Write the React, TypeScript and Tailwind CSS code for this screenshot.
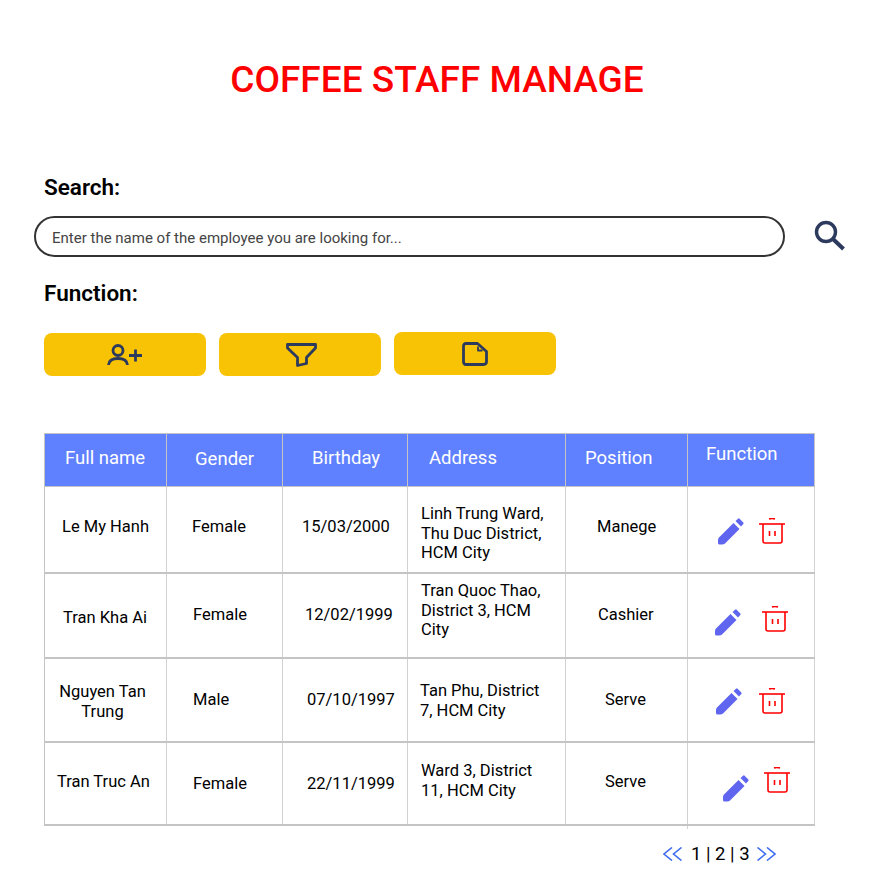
import React from 'react';

const headers = [
  { label: 'Full name', cls: 'pl-[20px] pt-[11px]' },
  { label: 'Gender', cls: 'pl-[28px] pt-[12px]' },
  { label: 'Birthday', cls: 'pl-[29px] pt-[11px]' },
  { label: 'Address', cls: 'pl-[21px] pt-[11px]' },
  { label: 'Position', cls: 'pl-[19px] pt-[11px]' },
  { label: 'Function', cls: 'pl-[18px] pt-[7px]' },
];

const rows = [
  {
    h: 'h-[87px]',
    cells: [
      { text: 'Le My Hanh', cls: 'pl-[17px] pt-[30px]' },
      { text: 'Female', cls: 'pl-[25px] pt-[30px]' },
      { text: '15/03/2000', cls: 'pl-[19px] pt-[30px]' },
      { text: 'Linh Trung Ward, Thu Duc District, HCM City', cls: 'pl-[13px] pt-[17px] pr-[14px]' },
      { text: 'Manege', cls: 'pl-[31px] pt-[30px]' },
    ],
    pen: 'ml-[30px] mt-[31px]',
    trash: 'ml-[15px] mt-[31px]',
  },
  {
    h: 'h-[85px]',
    cells: [
      { text: 'Tran Kha Ai', cls: 'pl-[18px] pt-[34px]' },
      { text: 'Female', cls: 'pl-[26px] pt-[31px]' },
      { text: '12/02/1999', cls: 'pl-[22px] pt-[31px]' },
      { text: 'Tran Quoc Thao, District 3, HCM City', cls: 'pl-[13px] pt-[7px] pr-[14px]' },
      { text: 'Cashier', cls: 'pl-[32px] pt-[31px]' },
    ],
    pen: 'ml-[27px] mt-[35px]',
    trash: 'ml-[21px] mt-[32px]',
  },
  {
    h: 'h-[84px]',
    cells: [
      { text: 'Nguyen Tan Trung', cls: 'pl-[7px] pr-[13px] pt-[23px] text-center' },
      { text: 'Male', cls: 'pl-[26px] pt-[31px]' },
      { text: '07/10/1997', cls: 'pl-[24px] pt-[31px]' },
      { text: 'Tan Phu, District 7, HCM City', cls: 'pl-[12px] pt-[22px] pr-[14px]' },
      { text: 'Serve', cls: 'pl-[39px] pt-[31px]' },
    ],
    pen: 'ml-[28px] mt-[29px]',
    trash: 'ml-[17px] mt-[29px]',
  },
  {
    h: 'h-[83px]',
    cells: [
      { text: 'Tran Truc An', cls: 'pl-[12px] pt-[29px]' },
      { text: 'Female', cls: 'pl-[26px] pt-[31px]' },
      { text: '22/11/1999', cls: 'pl-[24px] pt-[31px]' },
      { text: 'Ward 3, District 11, HCM City', cls: 'pl-[13px] pt-[18px] pr-[14px]' },
      { text: 'Serve', cls: 'pl-[39px] pt-[29px]' },
    ],
    pen: 'ml-[35px] mt-[32px]',
    trash: 'ml-[15px] mt-[24px]',
  },
];

const Pencil = ({ className }: { className: string }) => (
  <svg viewBox="0 0 26 27" className={`w-[26px] h-[27px] ${className}`} fill="#5f65ee">
    <path d="M1 19.5 L15.5 5 L21.5 11 L7 25.5 Q6 26.5 4 26.5 L1.5 26.5 Q0 26.5 0 25 L0 22 Q0 20.5 1 19.5 Z" />
    <path d="M17.5 3 L20 0.7 Q20.8 0 21.6 0.7 L25.3 4.4 Q26 5.2 25.3 6 L23 8.6 Z" />
  </svg>
);

const Trash = ({ className }: { className: string }) => (
  <svg
    viewBox="0 0 26 26"
    className={`w-[26px] h-[26px] ${className}`}
    fill="none"
    stroke="#ff0000"
    strokeWidth="1.6"
  >
    <path d="M0 6 H26" />
    <path d="M10 1 Q13 0 16 1" />
    <path d="M4 6 V23 Q4 25 6 25 H21 Q23 25 23 23 V6" />
    <path d="M10.5 13 V18 M16 13 V18" />
  </svg>
);

const App = () => {
  return (
    <div className="w-[887px] h-[889px] bg-white font-['Roboto',sans-serif] text-black overflow-hidden">
      <h1 className="pt-[58px] pr-[13px] h-[172px] text-center text-[37px] leading-[44px] font-medium text-[#ff0000]">
        COFFEE STAFF MANAGE
      </h1>

      <div className="pl-[44px] pt-[1px] h-[30px] text-[22.5px] leading-[28px] font-semibold">Search:</div>

      <div className="flex items-center mt-[14px] ml-[34px]">
        <div className="w-[751px] h-[41px] rounded-full border-2 border-[#333333] pl-[16px] pt-[3px] flex items-center text-[15px] text-[#444444]">
          Enter the name of the employee you are looking for...
        </div>
        <svg viewBox="0 0 31 31" className="w-[31px] h-[31px] ml-[29px] mb-[2px]" fill="none" stroke="#2c3a5e">
          <circle cx="12" cy="12" r="9.5" strokeWidth="3.4" />
          <path d="M19 19 L29.5 29" strokeWidth="4" />
        </svg>
      </div>

      <div className="pl-[44px] pt-[1px] mt-[21px] h-[30px] text-[22.5px] leading-[28px] font-semibold">Function:</div>

      <div className="flex items-start gap-[13px] pl-[44px] mt-[24px]">
        <button className="w-[162px] h-[43px] mt-[1px] rounded-lg bg-[#f7c304] flex items-center justify-center">
          <svg viewBox="0 0 36 22" className="w-[36px] h-[22px]" fill="none" stroke="#2c3a5e" strokeWidth="2.8">
            <circle cx="11" cy="6.5" r="5" />
            <path d="M1.5 21 Q2 14.5 11 14.5 Q20 14.5 20.5 21" />
            <path d="M22 11.5 H35 M28.5 5.5 V17.5" />
          </svg>
        </button>
        <button className="w-[162px] h-[43px] mt-[1px] rounded-lg bg-[#f7c304] flex items-center justify-center">
          <svg viewBox="0 0 31 24" className="w-[31px] h-[24px] ml-[3px]" fill="none" stroke="#2c3a5e" strokeWidth="2.8" strokeLinejoin="round">
            <path d="M1.5 1.5 H29.5 V5 L20.5 14.5 V20.5 L11.5 22.5 V14.5 L1.5 5 Z" />
          </svg>
        </button>
        <button className="w-[162px] h-[43px] rounded-lg bg-[#f7c304] flex items-center justify-center">
          <svg viewBox="0 0 26 24" className="w-[26px] h-[24px]" fill="none" stroke="#2c3a5e" strokeWidth="2.8" strokeLinejoin="round">
            <path d="M4 1.5 H15.5 L24.5 9.5 V19.5 Q24.5 22.5 21.5 22.5 H4 Q1.5 22.5 1.5 19.5 V4 Q1.5 1.5 4 1.5 Z" />
            <path d="M16 4.5 V8.5 H20.5" strokeWidth="1.8" />
          </svg>
        </button>
      </div>

      <div className="ml-[44px] mt-[57px] w-[771px]">
        <div className="grid grid-cols-[122px_116px_125px_158px_122px_127px] h-[54px] bg-[#5f81ff] border-l border-t border-b border-[#c4c4c4] text-white text-[18.5px] leading-[26px]">
          {headers.map((h) => (
            <div key={h.label} className={`border-r border-[#c4c4c4] ${h.cls}`}>
              {h.label}
            </div>
          ))}
        </div>

        {rows.map((row, i) => (
          <div
            key={i}
            className={`grid grid-cols-[122px_116px_125px_158px_122px_127px] ${row.h} border-l border-b-2 border-[#c4c4c4] text-[16.5px] leading-[19.5px]`}
          >
            {row.cells.map((cell, j) => (
              <div key={j} className={`border-r border-[#d2d2d2] ${cell.cls}`}>
                {cell.text}
              </div>
            ))}
            <div className="border-r border-[#d2d2d2] flex items-start">
              <Pencil className={row.pen} />
              <Trash className={row.trash} />
            </div>
          </div>
        ))}

        <div className="ml-[643px] w-px h-[3px] bg-[#d2d2d2]" />

        <div className="flex items-center mt-[14px] ml-[619px] text-[18.5px] leading-[22px]">
          <svg viewBox="0 0 19 14" className="w-[19px] h-[14px]" fill="none" stroke="#3d6cf0" strokeWidth="1.6">
            <path d="M9 0.5 L1 7 L9 13.5 M18.5 0.5 L10.5 7 L18.5 13.5" />
          </svg>
          <span className="ml-[9px]">1 | 2 | 3</span>
          <svg viewBox="0 0 19 14" className="w-[19px] h-[14px] ml-[7px]" fill="none" stroke="#3d6cf0" strokeWidth="1.6">
            <path d="M0.5 0.5 L8.5 7 L0.5 13.5 M10 0.5 L18 7 L10 13.5" />
          </svg>
        </div>
      </div>
    </div>
  );
};

export default App;
